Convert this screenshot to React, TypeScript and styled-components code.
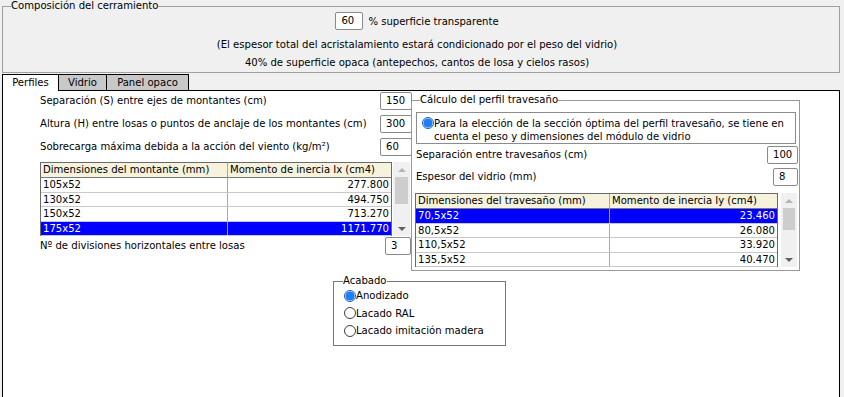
import React from "react";
import styled, { createGlobalStyle } from "styled-components";

const GlobalStyle = createGlobalStyle`
  html, body { margin: 0; padding: 0; background: #f0f0f0; }
  body {
    font-family: "DejaVu Sans Condensed", "DejaVu Sans", sans-serif;
    font-stretch: condensed;
    font-size: 11.2px;
    color: #000;
  }
  * { box-sizing: border-box; }
`;

const Page = styled.div`
  width: 844px;
  height: 397px;
  overflow: hidden;
  padding: 0 4px 0 2px;
`;

const Fieldset = styled.fieldset<{ $border?: string }>`
  margin: 0;
  padding: 0;
  min-width: 0;
  border: 1px solid ${(p) => p.$border || "#a0a0a0"};
`;

const Legend = styled.legend<{ $indent?: number }>`
  font: inherit;
  line-height: 12px;
  padding: 0;
  margin-left: ${(p) => p.$indent ?? 8}px;
`;

const TopSet = styled(Fieldset)`
  height: 73px;
`;

const TopBody = styled.div`
  display: flex;
  flex-direction: column;
  align-items: center;
  padding-right: 8px;
`;

const PercentRow = styled.div`
  display: flex;
  align-items: center;
  gap: 5px;
  height: 18px;
`;

const Note = styled.div<{ $mt: number }>`
  margin-top: ${(p) => p.$mt}px;
  line-height: 14px;
  white-space: nowrap;
`;

const NumBox = styled.div<{ $w: number; $mr?: number }>`
  width: ${(p) => p.$w}px;
  height: 18px;
  flex: none;
  margin-right: ${(p) => p.$mr ?? 0}px;
  background: #fff;
  border: 1px solid #8a8a8a;
  border-radius: 2px;
  padding-left: 5px;
  line-height: 16px;
`;

const TabStrip = styled.div`
  display: flex;
  height: 16px;
  margin-top: 1px;
  position: relative;
  z-index: 1;
`;

const Tab = styled.div<{ $w: number; $active?: boolean }>`
  width: ${(p) => p.$w}px;
  height: ${(p) => (p.$active ? 17 : 16)}px;
  & + & { margin-left: -1px; }
  border: 1px solid #000;
  border-bottom: none;
  background: ${(p) => (p.$active ? "#fff" : "#c8c8c8")};
  text-align: center;
  line-height: 15px;
`;

const Panel = styled.div`
  height: 330px;
  background: #fff;
  border: 1px solid #000;
  border-bottom: none;
  padding: 0 0 0 37px;
`;

const Columns = styled.div`
  display: flex;
  align-items: flex-start;
`;

const LeftCol = styled.div`
  width: 372px;
  flex: none;
  display: flex;
  flex-direction: column;
`;

const FieldRow = styled.div<{ $h: number; $pt?: number }>`
  display: flex;
  justify-content: space-between;
  align-items: flex-start;
  height: ${(p) => p.$h}px;
  padding-top: ${(p) => p.$pt ?? 1}px;
`;

const Label = styled.span`
  line-height: 18px;
  white-space: nowrap;
`;

const GridWrap = styled.div<{ $mt: number; $ml?: number; $gap: number }>`
  display: flex;
  align-items: stretch;
  gap: ${(p) => p.$gap}px;
  margin-top: ${(p) => p.$mt}px;
  margin-left: ${(p) => p.$ml ?? 0}px;
`;

const Grid = styled.div<{ $w: number; $cols: string }>`
  width: ${(p) => p.$w}px;
  border: 1px solid #6a6a6a;
  border-bottom: none;
  --cols: ${(p) => p.$cols};
`;

const GridRow = styled.div<{ $head?: boolean; $sel?: boolean }>`
  display: grid;
  grid-template-columns: var(--cols);
  height: ${(p) => (p.$head ? 15 : 14.5)}px;
  background: ${(p) => (p.$head ? "#f6f2dc" : p.$sel ? "#0000ff" : "#fff")};
  color: ${(p) => (p.$sel ? "#fff" : "#000")};
  border-bottom: 1px solid ${(p) => (p.$head ? "#7a7a7a" : "#c8c8c8")};
`;

const Cell = styled.div<{ $num?: boolean }>`
  padding: 0 2px;
  line-height: 13.5px;
  white-space: nowrap;
  overflow: hidden;
  text-align: ${(p) => (p.$num ? "right" : "left")};
  & + & { border-left: 1px solid #a8a8a8; }
`;

const ScrollBar = styled.div<{ $w: number }>`
  width: ${(p) => p.$w}px;
  background: #f0f0f0;
  display: flex;
  flex-direction: column;
  align-items: center;
`;

const ArrowCell = styled.div`
  height: 15px;
  width: 100%;
  display: flex;
  align-items: center;
  justify-content: center;
`;

const Arrow = styled.span<{ $down?: boolean }>`
  width: 0;
  height: 0;
  border-left: 4px solid transparent;
  border-right: 4px solid transparent;
  ${(p) =>
    p.$down
      ? "border-top: 4px solid #606060;"
      : "border-bottom: 4px solid #b4b4b4;"}
`;

const Thumb = styled.div<{ $h: number }>`
  width: calc(100% - 4px);
  height: ${(p) => p.$h}px;
  background: #cdcdcd;
`;

const Spacer = styled.div`
  flex: 1;
`;

const RightSet = styled(Fieldset)`
  width: 389px;
  flex: none;
  margin: 3px 0 0 -1px;
  border-color: #999;
`;

const RightBody = styled.div`
  padding: 0 1px 3px 4px;
`;

const RadioBox = styled.div`
  margin: 6px 2px 0 0;
  height: 32px;
  border: 1px solid #8c8c8c;
  display: flex;
  align-items: flex-start;
  padding: 4px 0 0 5px;
  line-height: 13px;
`;

const Radio = styled.span<{ $checked?: boolean }>`
  width: 12px;
  height: 12px;
  flex: none;
  border-radius: 50%;
  border: 1px solid ${(p) => (p.$checked ? "#1360c4" : "#3c3c3c")};
  background: ${(p) =>
    p.$checked
      ? "radial-gradient(circle, #1f7ff0 0 4.2px, #e6f0fc 4.8px)"
      : "#fff"};
`;

const AcabadoSet = styled(Fieldset)`
  width: 173px;
  margin: 4px 0 0 293px;
  border-color: #777;
`;

const AcabadoBody = styled.div`
  padding: 0 0 5px 10px;
`;

const OptionRow = styled.div`
  display: flex;
  align-items: center;
  height: 17.5px;
  white-space: nowrap;
`;

type Row = [string, string];

const montantes: Row[] = [
  ["105x52", "277.800"],
  ["130x52", "494.750"],
  ["150x52", "713.270"],
  ["175x52", "1171.770"],
];

const travesanos: Row[] = [
  ["70,5x52", "23.460"],
  ["80,5x52", "26.080"],
  ["110,5x52", "33.920"],
  ["135,5x52", "40.470"],
];

function DataGrid(props: {
  w: number;
  cols: string;
  head: Row;
  rows: Row[];
  sel: number;
  sbw: number;
  thumb: number;
  gap: number;
  mt: number;
  ml?: number;
}) {
  return (
    <GridWrap $mt={props.mt} $ml={props.ml} $gap={props.gap}>
      <Grid $w={props.w} $cols={props.cols}>
        <GridRow $head>
          <Cell>{props.head[0]}</Cell>
          <Cell>{props.head[1]}</Cell>
        </GridRow>
        {props.rows.map((r, i) => (
          <GridRow key={r[0]} $sel={i === props.sel}>
            <Cell>{r[0]}</Cell>
            <Cell $num>{r[1]}</Cell>
          </GridRow>
        ))}
      </Grid>
      <ScrollBar $w={props.sbw}>
        <ArrowCell>
          <Arrow />
        </ArrowCell>
        <Thumb $h={props.thumb} />
        <Spacer />
        <ArrowCell>
          <Arrow $down />
        </ArrowCell>
      </ScrollBar>
    </GridWrap>
  );
}

export default function App() {
  return (
    <Page>
      <GlobalStyle />
      <TopSet>
        <Legend $indent={8}>Composición del cerramiento</Legend>
        <TopBody>
          <PercentRow>
            <NumBox $w={28}>60</NumBox>
            <span>% superficie transparente</span>
          </PercentRow>
          <Note $mt={8}>
            (El espesor total del acristalamiento estará condicionado por el peso
            del vidrio)
          </Note>
          <Note $mt={4}>
            40% de superficie opaca (antepechos, cantos de losa y cielos rasos)
          </Note>
        </TopBody>
      </TopSet>

      <TabStrip>
        <Tab $w={57} $active>
          Perfiles
        </Tab>
        <Tab $w={49}>Vidrio</Tab>
        <Tab $w={83}>Panel opaco</Tab>
      </TabStrip>

      <Panel>
        <Columns>
          <LeftCol>
            <FieldRow $h={23}>
              <Label>Separación (S) entre ejes de montantes (cm)</Label>
              <NumBox $w={32}>150</NumBox>
            </FieldRow>
            <FieldRow $h={23}>
              <Label>
                Altura (H) entre losas o puntos de anclaje de los montantes (cm)
              </Label>
              <NumBox $w={32}>300</NumBox>
            </FieldRow>
            <FieldRow $h={23}>
              <Label>Sobrecarga máxima debida a la acción del viento (kg/m²)</Label>
              <NumBox $w={32}>60</NumBox>
            </FieldRow>
            <DataGrid
              w={352}
              cols="186px 1fr"
              head={["Dimensiones del montante (mm)", "Momento de inercia Ix (cm4)"]}
              rows={montantes}
              sel={3}
              sbw={17}
              thumb={27}
              gap={1}
              mt={2}
            />
            <FieldRow $h={20}>
              <Label>Nº de divisiones horizontales entre losas</Label>
              <NumBox $w={26} $mr={1}>
                3
              </NumBox>
            </FieldRow>
          </LeftCol>

          <RightSet>
            <Legend $indent={8}>Cálculo del perfil travesaño</Legend>
            <RightBody>
              <RadioBox>
                <Radio $checked />
                <span>
                  Para la elección de la sección óptima del perfil travesaño, se
                  tiene en
                  <br />
                  cuenta el peso y dimensiones del módulo de vidrio
                </span>
              </RadioBox>
              <FieldRow $h={22} $pt={2}>
                <Label>Separación entre travesaños (cm)</Label>
                <NumBox $w={31}>100</NumBox>
              </FieldRow>
              <FieldRow $h={22} $pt={2}>
                <Label>Espesor del vidrio (mm)</Label>
                <NumBox $w={25}>8</NumBox>
              </FieldRow>
              <DataGrid
                w={363}
                cols="193px 1fr"
                head={[
                  "Dimensiones del travesaño (mm)",
                  "Momento de inercia Iy (cm4)",
                ]}
                rows={travesanos}
                sel={0}
                sbw={16}
                thumb={22}
                gap={3}
                mt={5}
                ml={-1}
              />
            </RightBody>
          </RightSet>
        </Columns>

        <AcabadoSet>
          <Legend $indent={9}>Acabado</Legend>
          <AcabadoBody>
            <OptionRow>
              <Radio $checked />
              Anodizado
            </OptionRow>
            <OptionRow>
              <Radio />
              Lacado RAL
            </OptionRow>
            <OptionRow>
              <Radio />
              Lacado imitación madera
            </OptionRow>
          </AcabadoBody>
        </AcabadoSet>
      </Panel>
    </Page>
  );
}
